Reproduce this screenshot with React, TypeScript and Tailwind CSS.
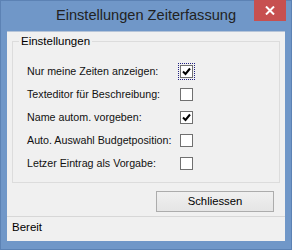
import React from "react";

const options = [
  { label: "Nur meine Zeiten anzeigen:", checked: true, focus: true },
  { label: "Texteditor für Beschreibung:", checked: false },
  { label: "Name autom. vorgeben:", checked: true },
  { label: "Auto. Auswahl Budgetposition:", checked: false },
  { label: "Letzer Eintrag als Vorgabe:", checked: false },
];

const Check = ({ checked, focus }: { checked: boolean; focus?: boolean }) => (
  <div
    className={
      focus
        ? "w-[17px] h-[17px] -m-[2px] border border-dotted border-[#202080] flex items-center justify-center"
        : "w-[13px] h-[13px] flex items-center justify-center"
    }
  >
    <div className="w-[13px] h-[13px] border border-[#707070] bg-white flex items-center justify-center">
      {checked && (
        <svg width="9" height="9" viewBox="0 0 9 9">
          <path d="M1 4.5 L3.5 7 L8 1.5" fill="none" stroke="#000" strokeWidth="2" />
        </svg>
      )}
    </div>
  </div>
);

export default function App() {
  return (
    <div
      className="w-[292px] h-[250px] bg-[#7097c8] border border-[#5c82b4] flex flex-col text-[10.7px] text-[#000]"
      style={{ fontFamily: '"Liberation Sans", Arial, sans-serif' }}
    >
      {/* title bar */}
      <div className="h-[30px] flex relative">
        <div className="flex-1 flex items-center justify-center text-[14.6px] text-[#222] pb-[1px]">
          Einstellungen Zeiterfassung
        </div>
        <div className="absolute right-[5px] -top-px w-[32px] h-[21px] bg-[#c75050] flex items-center justify-center">
          <svg width="10" height="9" viewBox="0 0 10 9">
            <path d="M1 0.5 L9 8.5 M9 0.5 L1 8.5" stroke="#fff" strokeWidth="2" />
          </svg>
        </div>
      </div>

      {/* client area */}
      <div className="mx-[6px] h-[210px] bg-[#f0f0f0] border-t border-[#5c82b4]/40 flex flex-col">
        <div className="px-[5px] pt-[9px]">
          <div className="relative border border-[#dcdcdc] h-[142px] pt-[18px] pl-[14px]">
            <span className="absolute -top-[9px] left-[6px] px-[2px] bg-[#f0f0f0] leading-[16px] text-[11.5px]">
              Einstellungen
            </span>
            {options.map((o) => (
              <div key={o.label} className="h-[23px] flex items-center">
                <span className="w-[153px] whitespace-nowrap text-[#111]">{o.label}</span>
                <Check checked={o.checked} focus={o.focus} />
              </div>
            ))}
          </div>
        </div>

        <div className="flex justify-end pr-[11px] pt-[8px]">
          <button className="w-[118px] h-[21px] border border-[#acacac] bg-gradient-to-b from-[#f0f0f0] to-[#e5e5e5] text-[11.3px] leading-none">
            Schliessen
          </button>
        </div>

        <div className="mt-[4px] border-t border-[#d7d7d7] flex-1 flex items-center px-[5px] pb-[2px] text-[11.5px]">
          Bereit
        </div>
      </div>
    </div>
  );
}
